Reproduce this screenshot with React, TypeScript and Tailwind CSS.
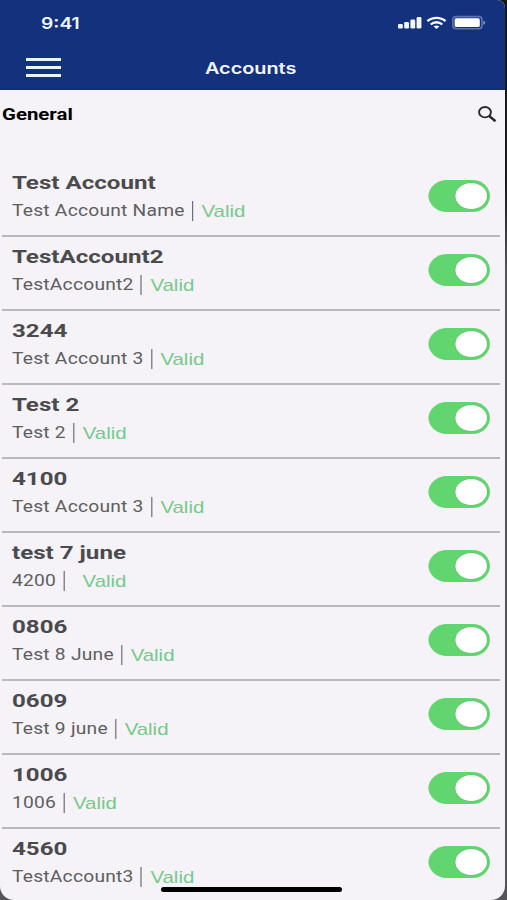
interface Account {
    title: string;
    name: string;
    status: string;
    wide?: boolean;
}

const ACCOUNTS: Account[] = [
    { title: 'Test Account', name: 'Test Account Name', status: 'Valid' },
    { title: 'TestAccount2', name: 'TestAccount2', status: 'Valid' },
    { title: '3244', name: 'Test Account 3', status: 'Valid' },
    { title: 'Test 2', name: 'Test 2', status: 'Valid' },
    { title: '4100', name: 'Test Account 3', status: 'Valid' },
    { title: 'test 7 june', name: '4200', status: 'Valid', wide: true },
    { title: '0806', name: 'Test 8 June', status: 'Valid' },
    { title: '0609', name: 'Test 9 june', status: 'Valid' },
    { title: '1006', name: '1006', status: 'Valid' },
    { title: '4560', name: 'TestAccount3', status: 'Valid' }
];

function StatusIcons() {
    return (
        <svg width="88" height="16" viewBox="0 0 88 16" fill="none" aria-hidden="true">
            {/* Signal */}
            <g fill="#f4f8ff">
                <rect x="0" y="9" width="4.8" height="4.6" rx="1.3" />
                <rect x="6.2" y="7" width="4.8" height="6.6" rx="1.3" />
                <rect x="12.4" y="4.6" width="4.8" height="9" rx="1.3" />
                <rect x="18.6" y="2" width="4.8" height="11.6" rx="1.3" />
            </g>
            {/* Wifi */}
            <g stroke="#f4f8ff" strokeWidth="2.3">
                <path d="M29.4 6.2C34.4 1.7 42.6 1.7 47.6 6.2" />
                <path d="M32.7 9.5C35.9 6.5 41.1 6.5 44.3 9.5" />
            </g>
            <path d="M35.6 11.5C37.4 10 39.6 10 41.4 11.5L38.5 14Z" fill="#f4f8ff" />
            {/* Battery */}
            <rect x="54.8" y="1.6" width="29.2" height="12.2" rx="3.2" stroke="#5f74b0" strokeWidth="1.6" />
            <rect x="56.6" y="3.3" width="25.2" height="8.8" rx="1.6" fill="white" />
            <path d="M85.4 5.7v4c1.3-.4 1.8-1.1 1.8-2s-.5-1.6-1.8-2Z" fill="#8294c4" />
        </svg>
    );
}

function Toggle() {
    return (
        <button role="switch" aria-checked="true" className="block h-8 w-[62px] shrink-0">
            <svg width="62" height="32" viewBox="0 0 62 32" aria-hidden="true">
                <path d="M18.9 0H44.5C54.5 0 62 7.6 62 16S54.5 32 44.5 32H18.9C8.9 32 .4 24.4 .4 16S8.9 0 18.9 0Z" fill="#62d66e" />
                <ellipse cx="43.2" cy="16" rx="16.5" ry="13.7" fill="#5bc76c" />
                <ellipse cx="43.2" cy="16" rx="15.8" ry="13" fill="white" />
            </svg>
        </button>
    );
}

function AccountRow({ account }: { account: Account }) {
    return (
        <li className="flex h-[74px] shrink-0 items-start justify-between border-b-2 border-[#b9b8bc] pr-[10px] pl-[10px]">
            <div className="pt-2">
                <h3 className="origin-left scale-x-[1.27] text-[19px] leading-6 font-bold whitespace-nowrap text-[#4b4a4d]">{account.title}</h3>
                <div className="mt-1 flex h-6 origin-left scale-x-[1.2] items-center whitespace-nowrap">
                    <span className="text-base leading-6 tracking-[0.2px] text-[#5e5d60]">{account.name}</span>
                    <span className="ml-[6px] h-5 w-px bg-[#6f6e72]" />
                    <span className={`pt-px font-["Liberation_Sans",sans-serif] text-[17px] leading-6 text-[#76c98a] ${account.wide ? 'ml-[15px]' : 'ml-[7px]'}`}>
                        {account.status}
                    </span>
                </div>
            </div>
            <div className="pt-[17px]">
                <Toggle />
            </div>
        </li>
    );
}

export default function App() {
    return (
        <div className='relative h-[900px] w-[507px] overflow-hidden bg-gradient-to-b from-[#17181c] from-20% to-[#55555a] to-30% font-["Roboto",sans-serif]'>
            <div className="flex h-full w-[505px] flex-col overflow-hidden rounded-tr-[8px] rounded-b-[14px] bg-[#f5f3f7]">
                {/* Header */}
                <header className='h-[90px] shrink-0 bg-[#14317e] font-["Inter",sans-serif] text-[#f0f6ff]'>
                    <div className="flex h-[45px] items-center justify-between pr-[19px] pl-[41px]">
                        <span className="origin-left scale-x-[1.2] text-base font-semibold">9:41</span>
                        <StatusIcons />
                    </div>
                    <div className="grid h-[45px] grid-cols-3 items-center pr-[3px]">
                        <button className="ml-[26px] flex w-[35px] flex-col gap-[5px]" aria-label="Menu">
                            <span className="h-[3px] w-full bg-[#edf3fc]" />
                            <span className="h-[3px] w-full bg-[#edf3fc]" />
                            <span className="h-[3px] w-full bg-[#edf3fc]" />
                        </button>
                        <h1 className="origin-center scale-x-[1.24] text-center text-base font-semibold">Accounts</h1>
                    </div>
                </header>

                {/* Section title */}
                <div className="flex h-[73px] shrink-0 items-start justify-between pt-3 pr-[6px] pl-[2px]">
                    <h2 className="origin-left scale-x-[1.2] text-[17px] leading-6 font-bold text-black">General</h2>
                    <svg width="22" height="24" viewBox="0 0 22 24" fill="none" stroke="#29282b" aria-hidden="true">
                        <ellipse cx="8" cy="10.2" rx="5.9" ry="5.2" strokeWidth="1.9" />
                        <path d="M12.2 14L18.5 19.2" strokeWidth="2.5" />
                    </svg>
                </div>

                {/* Accounts */}
                <ul className="flex min-h-0 flex-1 flex-col pr-[5px] pl-[2px]">
                    {ACCOUNTS.map((account, index) => (
                        <AccountRow key={index} account={account} />
                    ))}
                </ul>
            </div>

            {/* Home indicator */}
            <div className="absolute bottom-[8px] left-[161px] h-[5px] w-[181px] rounded-full bg-black" />
        </div>
    );
}
